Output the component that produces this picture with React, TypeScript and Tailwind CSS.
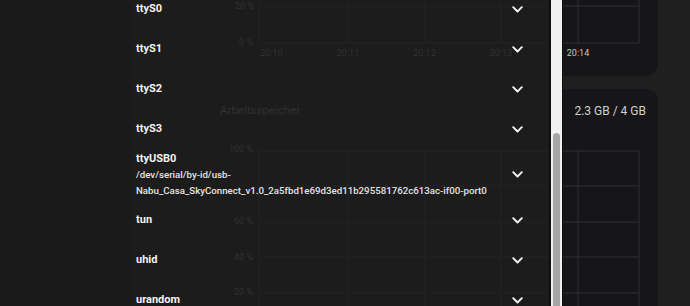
import React from "react";

function Chevron() {
  return (
    <svg width="11" height="7" viewBox="0 0 11 7" className="shrink-0">
      <path d="M1.2 1.2 L5.5 5.5 L9.8 1.2" stroke="#f5f5f5" strokeWidth="1.9" fill="none" strokeLinecap="round" strokeLinejoin="round" />
    </svg>
  );
}

function FaintBackground() {
  const xs = [129, 218, 295, 371];
  const h2 = [151, 186, 222, 257, 293];
  const line = "#222222";
  const txt = "#313131";
  return (
    <svg className="absolute inset-0" width="419" height="306" viewBox="0 0 419 306">
      <line x1="129" y1="6" x2="419" y2="6" stroke={line} strokeWidth="1" />
      <line x1="129" y1="43" x2="419" y2="43" stroke={line} strokeWidth="1" />
      {xs.map((x) => (
        <line key={"a" + x} x1={x} y1="0" x2={x} y2="43" stroke={line} strokeWidth="1" />
      ))}
      <text x="124" y="9" textAnchor="end" fontSize="9" fill={txt} fontFamily="Roboto, sans-serif">20 %</text>
      <text x="123" y="45" textAnchor="end" fontSize="9" fill={txt} fontFamily="Roboto, sans-serif">0 %</text>
      {[["20:10", 141.5], ["20:11", 218], ["20:12", 294.5], ["20:13", 371]].map(([t, x]) => (
        <text key={t as string} x={x as number} y="55.5" textAnchor="middle" fontSize="9" fill={txt} fontFamily="Roboto, sans-serif">{t}</text>
      ))}
      <text x="90" y="114" fontSize="11.5" fill={txt} fontFamily="Roboto, sans-serif">Arbeitsspeicher</text>
      {h2.map((y) => (
        <line key={"h" + y} x1="129" y1={y} x2="419" y2={y} stroke={line} strokeWidth="1" />
      ))}
      {xs.map((x) => (
        <line key={"b" + x} x1={x} y1="151" x2={x} y2="306" stroke={line} strokeWidth="1" />
      ))}
      {[["100 %", 152], ["60 %", 224], ["40 %", 260], ["20 %", 295]].map(([t, y]) => (
        <text key={t as string + y} x="123" y={y as number} textAnchor="end" fontSize="9" fill={txt} fontFamily="Roboto, sans-serif">{t}</text>
      ))}
    </svg>
  );
}

function Row({ label }: { label: string }) {
  return (
    <div className="flex h-[40px] items-center justify-between">
      <span className="text-[11px] font-bold leading-4 text-[#f2f2f2]">{label}</span>
      <Chevron />
    </div>
  );
}

export default function App() {
  return (
    <div className="flex h-[306px] w-[690px] overflow-hidden bg-[#1a1a1a] font-[Roboto,sans-serif]">
      <div className="w-[130px] shrink-0" />
      <div className="relative w-[419px] shrink-0 overflow-hidden bg-[#1c1c1c]">
        <FaintBackground />
        <div className="relative mt-[-11px] flex flex-col pl-[6px] pr-[26px]">
          <Row label="ttyS0" />
          <Row label="ttyS1" />
          <Row label="ttyS2" />
          <Row label="ttyS3" />
          <div className="flex h-[51px] items-center justify-between">
            <div className="flex flex-col">
              <span className="text-[11px] font-bold leading-4 text-[#f2f2f2]">ttyUSB0</span>
              <span className="text-[9.7px] font-medium leading-4 text-[#e4e4e4]">/dev/serial/by-id/usb-</span>
              <span className="text-[9.7px] font-medium leading-4 text-[#e4e4e4]">Nabu_Casa_SkyConnect_v1.0_2a5fbd1e69d3ed11b295581762c613ac-if00-port0</span>
            </div>
            <Chevron />
          </div>
          <Row label="tun" />
          <Row label="uhid" />
          <Row label="urandom" />
        </div>
      </div>
      <div className="w-[2px] shrink-0 bg-[#0f0f0f]" />
      <div className="flex w-[11px] shrink-0 justify-center bg-[#f1f1f1]">
        <div className="mt-[133px] h-[200px] w-[7px] rounded-t-full bg-[#a5a5a5]" />
      </div>
      <div className="w-[1px] shrink-0 bg-[#0f0f0f]" />
      <div className="flex flex-1 flex-col gap-[13px] bg-[#1f1f1f]">
        <div className="h-[76px] w-[95px] shrink-0 rounded-br-[12px] bg-[#161618]">
          <svg width="95" height="76" viewBox="0 0 95 76" className="block">
            <line x1="0" y1="6" x2="76" y2="6" stroke="#2e2e31" strokeWidth="1" />
            <line x1="0" y1="43" x2="76" y2="43" stroke="#2e2e31" strokeWidth="1" />
            <line x1="15" y1="0" x2="15" y2="43" stroke="#2e2e31" strokeWidth="1" />
            <line x1="76" y1="0" x2="76" y2="43" stroke="#2e2e31" strokeWidth="1" />
            <text x="15" y="55.5" textAnchor="middle" fontSize="9" fill="#c4c4c4" fontFamily="Roboto, sans-serif">20:14</text>
          </svg>
        </div>
        <div className="flex w-[95px] flex-1 flex-col rounded-tr-[12px] bg-[#161618]">
          <div className="h-[40px] pr-[12px] pt-[13.5px] text-right text-[12px] leading-4 text-[#cfcfcf]">2.3 GB / 4 GB</div>
          <svg width="95" height="177" viewBox="0 0 95 177" className="block">
            {[22, 57, 93, 128, 164].map((y) => (
              <line key={y} x1="0" y1={y} x2="76" y2={y} stroke="#2e2e31" strokeWidth="1" />
            ))}
            <line x1="15" y1="22" x2="15" y2="177" stroke="#2e2e31" strokeWidth="1" />
            <line x1="76" y1="22" x2="76" y2="177" stroke="#2e2e31" strokeWidth="1" />
          </svg>
        </div>
      </div>
    </div>
  );
}
